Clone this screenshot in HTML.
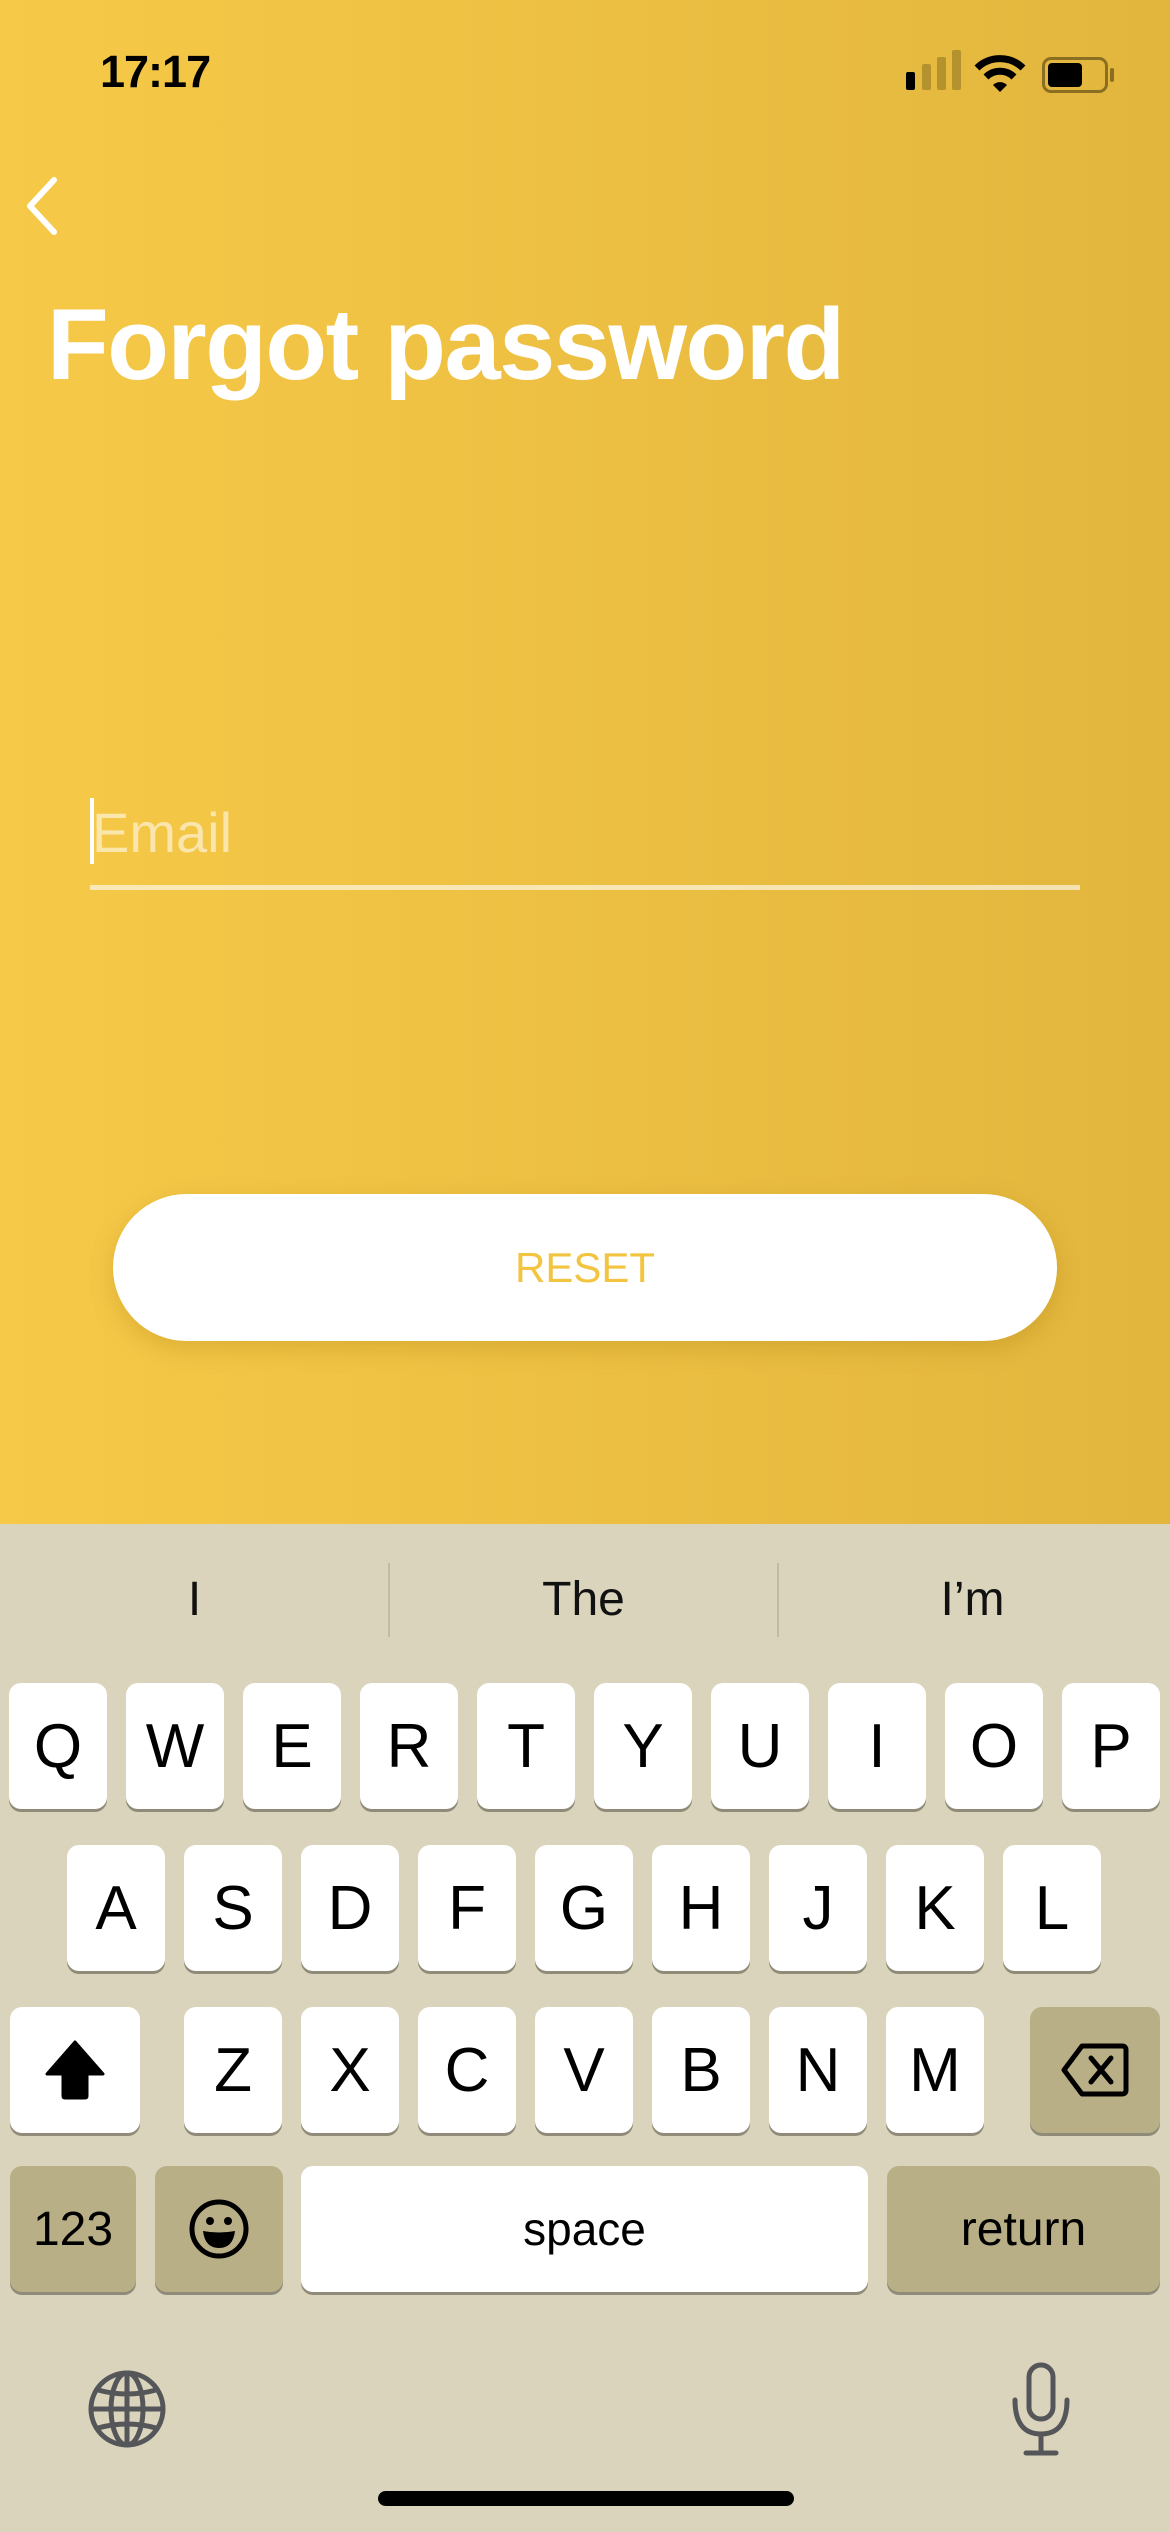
<!DOCTYPE html>
<html><head><meta charset="utf-8"><style>
*{margin:0;padding:0;box-sizing:border-box}
body{width:1170px;height:2532px;position:relative;overflow:hidden;font-family:"Liberation Sans",sans-serif;background:#d9d4bb}
.top{position:absolute;left:0;top:0;width:1170px;height:1524px;background:linear-gradient(90deg,#f7c948,#e2b63d)}
.abs{position:absolute}
.k{position:absolute;width:98px;height:126px;background:#fff;border-radius:12px;box-shadow:0 3px 0 #8f8b78;font-size:62px;color:#000;display:flex;align-items:center;justify-content:center}
.s{background:#b9af86}
.sug{position:absolute;top:1568px;font-size:48px;color:#111;width:389px;text-align:center;line-height:64px}
</style></head><body>
<div class="top"></div>
<div class="abs" style="left:100px;top:46px;font-size:45px;font-weight:bold;letter-spacing:-1px">17:17</div>
<!-- signal -->
<div class="abs" style="left:906px;top:72px;width:9px;height:18px;background:#000;border-radius:2px"></div>
<div class="abs" style="left:922px;top:64px;width:9px;height:26px;background:#b4922e;border-radius:2px"></div>
<div class="abs" style="left:937px;top:57px;width:9px;height:33px;background:#b4922e;border-radius:2px"></div>
<div class="abs" style="left:952px;top:50px;width:9px;height:40px;background:#b4922e;border-radius:2px"></div>
<svg class="abs" style="left:974px;top:54px" width="52" height="40" viewBox="0 0 52 40"><path d="M3 14 A33 33 0 0 1 49 14" stroke="#000" stroke-width="7" fill="none"/><path d="M12 23 A20 20 0 0 1 40 23" stroke="#000" stroke-width="7" fill="none"/><path d="M19 31 L26 38 L33 31 A10 10 0 0 0 19 31Z" fill="#000"/></svg>
<div class="abs" style="left:1042px;top:57px;width:66px;height:36px;border:3px solid #8a6f22;border-radius:9px"></div>
<div class="abs" style="left:1048px;top:63px;width:34px;height:24px;background:#000;border-radius:4px"></div>
<div class="abs" style="left:1110px;top:68px;width:4px;height:14px;background:#8a6f22;border-radius:2px"></div>
<svg class="abs" style="left:22px;top:176px" width="40" height="60" viewBox="0 0 40 60"><path d="M32 4 L8 30 L32 56" stroke="#fff" stroke-width="6" fill="none" stroke-linecap="round" stroke-linejoin="round"/></svg>
<div class="abs" style="left:47px;top:288px;font-size:101px;font-weight:bold;color:#fff;letter-spacing:-1.5px">Forgot password</div>
<div class="abs" style="left:90px;top:798px;width:4px;height:66px;background:#fff"></div>
<div class="abs" style="left:92px;top:800px;font-size:56px;color:rgba(255,255,255,0.55)">Email</div>
<div class="abs" style="left:90px;top:885px;width:990px;height:5px;background:rgba(255,255,255,0.6)"></div>
<div class="abs" style="left:113px;top:1194px;width:944px;height:147px;background:#fff;border-radius:74px;box-shadow:0 8px 24px rgba(150,110,0,0.25);font-size:42px;color:#f2c440;display:flex;align-items:center;justify-content:center">RESET</div>

<div class="sug" style="left:0">I</div>
<div class="sug" style="left:389px">The</div>
<div class="sug" style="left:778px">I’m</div>
<div class="abs" style="left:388px;top:1563px;width:2px;height:74px;background:#c0bba2"></div>
<div class="abs" style="left:777px;top:1563px;width:2px;height:74px;background:#c0bba2"></div>

<div class="k" style="left:9px;top:1683px">Q</div>
<div class="k" style="left:126px;top:1683px">W</div>
<div class="k" style="left:243px;top:1683px">E</div>
<div class="k" style="left:360px;top:1683px">R</div>
<div class="k" style="left:477px;top:1683px">T</div>
<div class="k" style="left:594px;top:1683px">Y</div>
<div class="k" style="left:711px;top:1683px">U</div>
<div class="k" style="left:828px;top:1683px">I</div>
<div class="k" style="left:945px;top:1683px">O</div>
<div class="k" style="left:1062px;top:1683px">P</div>

<div class="k" style="left:67px;top:1845px">A</div>
<div class="k" style="left:184px;top:1845px">S</div>
<div class="k" style="left:301px;top:1845px">D</div>
<div class="k" style="left:418px;top:1845px">F</div>
<div class="k" style="left:535px;top:1845px">G</div>
<div class="k" style="left:652px;top:1845px">H</div>
<div class="k" style="left:769px;top:1845px">J</div>
<div class="k" style="left:886px;top:1845px">K</div>
<div class="k" style="left:1003px;top:1845px">L</div>

<div class="k" style="left:10px;top:2007px;width:130px"><svg width="64" height="60" viewBox="0 0 64 60"><path d="M32 2 L60 34 L44 34 L44 56 Q44 58 42 58 L22 58 Q20 58 20 56 L20 34 L4 34 Z" fill="#000" stroke="#000" stroke-width="3" stroke-linejoin="round"/></svg></div>
<div class="k" style="left:184px;top:2007px">Z</div>
<div class="k" style="left:301px;top:2007px">X</div>
<div class="k" style="left:418px;top:2007px">C</div>
<div class="k" style="left:535px;top:2007px">V</div>
<div class="k" style="left:652px;top:2007px">B</div>
<div class="k" style="left:769px;top:2007px">N</div>
<div class="k" style="left:886px;top:2007px">M</div>
<div class="k s" style="left:1030px;top:2007px;width:130px"><svg width="70" height="56" viewBox="0 0 70 56"><path d="M22 4 L62 4 Q66 4 66 8 L66 48 Q66 52 62 52 L22 52 L4 28 Z" fill="none" stroke="#000" stroke-width="5" stroke-linejoin="round"/><path d="M31 16 L51 40 M51 16 L31 40" stroke="#000" stroke-width="5" stroke-linecap="round"/></svg></div>

<div class="k s" style="left:10px;top:2166px;width:126px;font-size:48px">123</div>
<div class="k s" style="left:155px;top:2166px;width:128px"><svg width="62" height="62" viewBox="0 0 62 62"><circle cx="31" cy="31" r="27" fill="none" stroke="#000" stroke-width="5"/><circle cx="22" cy="23" r="4" fill="#000"/><circle cx="40" cy="23" r="4" fill="#000"/><path d="M15 33 Q31 36 47 33 Q45 50 31 50 Q17 50 15 33Z" fill="#000"/></svg></div>
<div class="k" style="left:301px;top:2166px;width:567px;font-size:46px">space</div>
<div class="k s" style="left:887px;top:2166px;width:273px;font-size:48px">return</div>

<svg class="abs" style="left:86px;top:2368px" width="82" height="82" viewBox="0 0 82 82"><g fill="none" stroke="#555659" stroke-width="5"><circle cx="41" cy="41" r="36"/><ellipse cx="41" cy="41" rx="16" ry="36"/><path d="M41 5 V77 M5 41 H77 M12 22 Q41 30 70 22 M12 60 Q41 52 70 60"/></g></svg>
<svg class="abs" style="left:1010px;top:2362px" width="62" height="96" viewBox="0 0 62 96"><g fill="none" stroke="#555659" stroke-width="5" stroke-linecap="round"><rect x="19" y="3" width="24" height="54" rx="12"/><path d="M5 38 Q5 72 31 72 Q57 72 57 38 M31 72 V91 M16 91 H46"/></g></svg>
<div class="abs" style="left:378px;top:2491px;width:416px;height:15px;background:#000;border-radius:8px"></div>
</body></html>
